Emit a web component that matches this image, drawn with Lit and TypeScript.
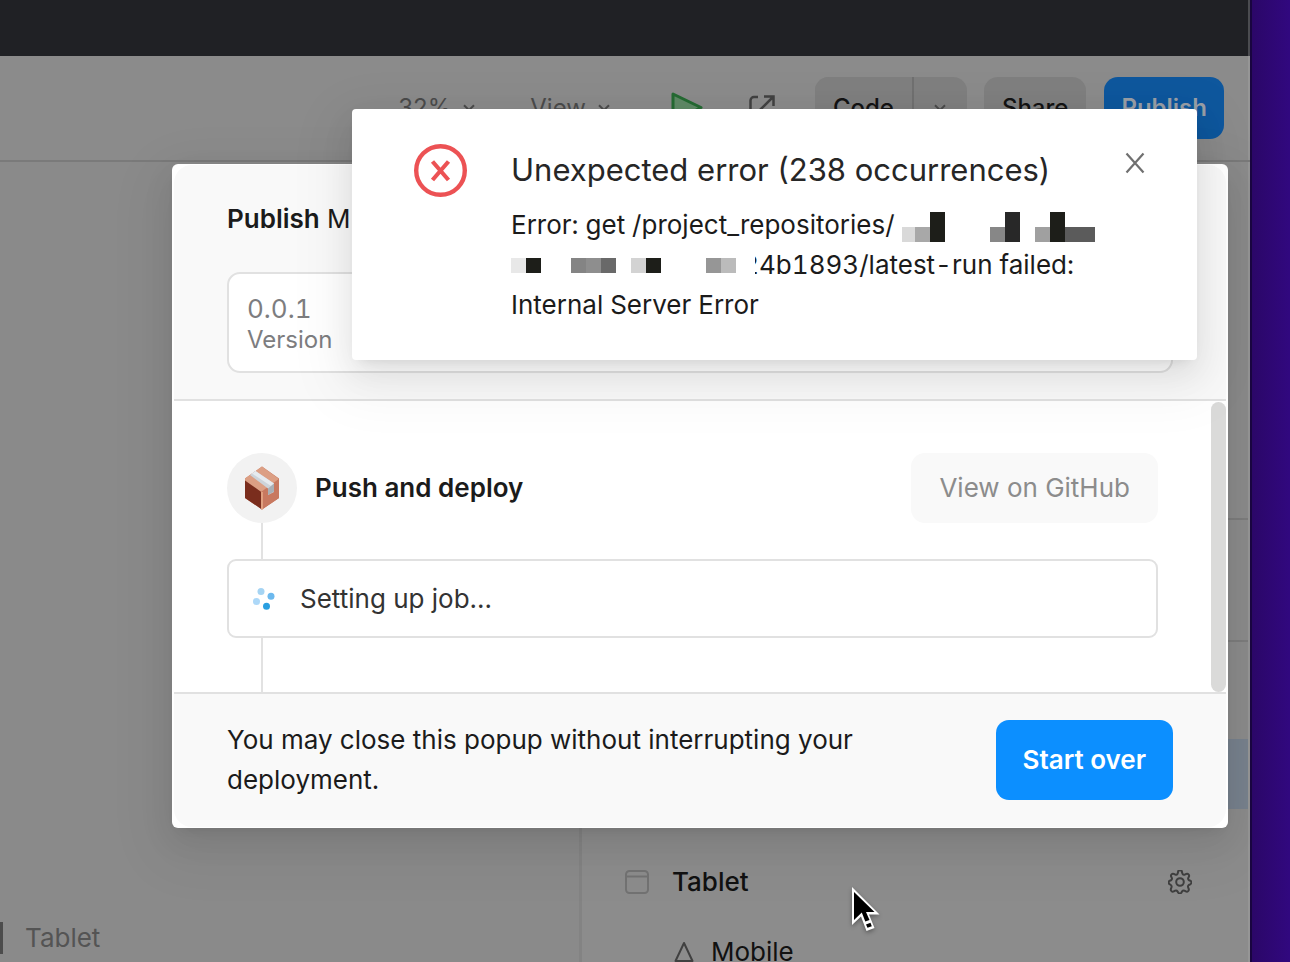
import { LitElement, html, css, svg } from "lit";
import { customElement, property } from "lit/decorators.js";

const FONT = css`"Inter", "Liberation Sans", sans-serif`;

const chevron = html`<svg class="chevron" width="12" height="8" viewBox="0 0 12 8" aria-hidden="true">
  <path d="M1 1.2 6 6.2 11 1.2" fill="none" stroke="currentColor" stroke-width="2" />
</svg>`;

@customElement("editor-toolbar")
export class EditorToolbar extends LitElement {
  static styles = css`
    :host {
      display: block;
      font: 400 24px/32px ${FONT};
    }
    .bar {
      display: flex;
      align-items: center;
      justify-content: flex-end;
      height: 104px;
      padding-right: 24px;
      background: #8b8b8b;
      border-bottom: 2px solid #7a7a7a;
      box-shadow: inset -2px 0 #969696;
      padding-right: 26px;
      box-sizing: content-box;
      color: #4b4b4b;
    }
    button {
      font: inherit;
      color: inherit;
      border: 0;
      padding: 0;
      background: none;
    }
    .menu {
      display: flex;
      align-items: center;
      gap: 12px;
      margin-right: 55px;
    }
    .play {
      margin-right: 46px;
      margin-left: 6px;
    }
    .open {
      margin-right: 40px;
    }
    .icon {
      display: flex;
    }
    .group {
      display: flex;
      height: 62px;
      border-radius: 14px;
      background: #7f7f7f;
      margin-right: 17px;
      overflow: hidden;
    }
    .solid {
      height: 62px;
      border-radius: 14px;
      background: #7f7f7f;
      padding: 0 18px;
      color: #141414;
      font-weight: 500;
    }
    .group .solid {
      border-radius: 0;
      border-right: 2px solid #707070;
    }
    .group .more {
      display: flex;
      align-items: center;
      justify-content: center;
      width: 53px;
    }
    .primary {
      margin-left: 18px;
      padding: 0 17px;
      background: #0e579d;
      color: #9a9fa6;
      font-weight: 600;
    }
  `;

  render() {
    return html`
      <header class="bar">
        <button class="menu">32% ${chevron}</button>
        <button class="menu">View ${chevron}</button>
        <button class="icon play" aria-label="Run">
          <svg width="32" height="32" viewBox="0 0 32 32">
            <path d="M2 2 30 15.500 2 30Z" fill="#5f8a66" stroke="#256b33" stroke-width="3" stroke-linejoin="round" />
          </svg>
        </button>
        <button class="icon open" aria-label="Open preview">
          <svg width="26" height="28" viewBox="0 0 26 28">
            <path
              d="M9 3H5a3.500 3.500 0 0 0-3.500 3.500V23A3.500 3.500 0 0 0 5 26.500h14a3.500 3.500 0 0 0 3.500-3.500v-6M11 16 23.500 3.500M15 2.500h9.500V12"
              fill="none"
              stroke="#424242"
              stroke-width="2.500"
            />
          </svg>
        </button>
        <div class="group">
          <button class="solid">Code</button>
          <button class="more" aria-label="More code options">${chevron}</button>
        </div>
        <button class="solid">Share</button>
        <button class="solid primary">Publish</button>
      </header>
    `;
  }
}

@customElement("editor-workspace")
export class EditorWorkspace extends LitElement {
  static styles = css`
    :host {
      display: flex;
      flex: 1;
      min-height: 0;
      overflow: hidden;
      border-right: 2px solid #969696;
      font: 400 26px/32px ${FONT};
    }
    .canvas {
      flex: 0 0 579px;
      display: flex;
      align-items: flex-end;
      padding-bottom: 8px;
      box-sizing: border-box;
      background: #8a8a8a;
    }
    .frame-label {
      border-left: 3px solid #4c4c4c;
      padding-left: 22px;
      color: #545454;
    }
    .panel {
      flex: 1;
      min-width: 0;
      background: #8c8c8c;
      border-left: 3px solid #838383;
      color: #111;
    }
    .section {
      border-bottom: 2px solid #7d7d7d;
      box-sizing: border-box;
      height: 122px;
    }
    .section.tall {
      height: 358px;
    }
    .selected {
      height: 70px;
      margin: 97px 0 38px;
      background: #78828e;
    }
    .row {
      display: flex;
      align-items: center;
      height: 70px;
      padding: 0 56px 0 43px;
      font-weight: 500;
    }
    .row .name {
      flex: 1;
      margin-left: 23px;
    }
    .row.child {
      padding-left: 92px;
      font-weight: 400;
    }
    .row.child .name {
      margin-left: 17px;
    }
    button {
      display: flex;
      padding: 0;
      border: 0;
      background: none;
    }
  `;

  render() {
    return html`
      <main class="canvas"><span class="frame-label">Tablet</span></main>
      <aside class="panel">
        <div class="section tall"></div>
        <div class="section"></div>
        <div class="selected"></div>
        <div class="row">
          <svg width="24" height="24" viewBox="0 0 24 24" aria-hidden="true">
            <rect x="1" y="1" width="22" height="22" rx="3.500" fill="none" stroke="#727272" stroke-width="2" />
            <path d="M1 6.500h22" stroke="#727272" stroke-width="2" />
          </svg>
          <span class="name">Tablet</span>
          <button aria-label="Tablet settings">
            <svg width="24" height="24" viewBox="0 0 24 24" fill="none" stroke="#3f3f3f" stroke-width="2" stroke-linejoin="round">
              <circle cx="12" cy="12" r="3.800" />
              <path
                d="M10 2.200a2 2 0 0 1 4 0l.500 1.500a2 2 0 0 0 2.300.900l1.500-.700a2 2 0 0 1 2.600 2.700l-.700 1.500a2 2 0 0 0 .900 2.200l1.200.400a2 2 0 0 1 0 3.600l-1.500.700a2 2 0 0 0-.700 2.200l.500 1.600a2 2 0 0 1-2.800 2.600l-1.400-.800a2 2 0 0 0-2.300.700l-.600 1.200a2 2 0 0 1-3.400 0l-.600-1.200a2 2 0 0 0-2.300-.700l-1.400.800a2 2 0 0 1-2.800-2.600l.500-1.600a2 2 0 0 0-.700-2.200l-1-.700a2 2 0 0 1 0-3.600l1.200-.400a2 2 0 0 0 .900-2.200l-.700-1.500a2 2 0 0 1 2.600-2.700l1.500.700a2 2 0 0 0 2.300-.900Z"
              />
            </svg>
          </button>
        </div>
        <div class="row child">
          <svg width="20" height="22" viewBox="0 0 20 22" aria-hidden="true">
            <path d="M10 2 18.500 20H1.500Z" fill="none" stroke="#404040" stroke-width="2" stroke-linejoin="round" />
          </svg>
          <span class="name">Mobile</span>
        </div>
      </aside>
    `;
  }
}

@customElement("publish-dialog")
export class PublishDialog extends LitElement {
  @property() version = "0.0.1";

  static styles = css`
    :host {
      display: block;
      font: 400 26px/40px ${FONT};
      color: #1b1b1b;
    }
    .dialog {
      background: #fff;
      border-radius: 6px;
      padding: 1px 2px;
      box-shadow: 0 6px 12px -8px rgba(0, 0, 0, 0.12), 0 12px 32px rgba(0, 0, 0, 0.08),
        0 18px 56px 16px rgba(0, 0, 0, 0.05);
    }
    .head {
      padding: 34px 53px 26px;
      background: #f9f9f9;
      border-radius: 18px 18px 0 0;
      border-bottom: 2px solid #e1e1e1;
    }
    h2 {
      margin: 0 0 33px;
      font: inherit;
    }
    h2 b {
      font-weight: 600;
    }
    .field {
      display: flex;
      flex-direction: column-reverse;
      padding: 19px 18px 16px;
      border: 2px solid #e1e1e1;
      border-radius: 13px;
      background: #fff;
      color: #7d7d7f;
    }
    .field input {
      font: 400 26px/32px ${FONT};
      font-variant-numeric: tabular-nums;
      height: 32px;
      color: inherit;
      border: 0;
      padding: 0;
      background: none;
      width: 100%;
      outline: 0;
    }
    .field label {
      font-size: 24px;
      line-height: 30px;
    }
    .body {
      display: flex;
    }
    .steps {
      flex: 1;
      display: flex;
      flex-direction: column;
      padding: 52px 53px 0;
    }
    .step {
      display: flex;
      align-items: center;
      gap: 18px;
    }
    .badge {
      display: grid;
      place-items: center;
      width: 70px;
      height: 70px;
      border-radius: 50%;
      background: #f2f2f2;
    }
    .step h3 {
      flex: 1;
      margin: 0;
      font: inherit;
      font-weight: 600;
    }
    .ghost {
      height: 70px;
      padding: 0 28px;
      border: 0;
      border-radius: 14px;
      background: #f9f9f9;
      color: #8c8c8c;
      font: 400 26px/40px ${FONT};
    }
    .link {
      width: 2px;
      height: 36px;
      margin-left: 34px;
      background: #e2e2e2;
    }
    .link.last {
      height: 54px;
    }
    .job {
      display: flex;
      align-items: center;
      gap: 23px;
      height: 75px;
      padding: 0 24px;
      border: 2px solid #e1e1e1;
      border-radius: 9px;
      color: #333;
    }
    .thumb {
      width: 15px;
      border-radius: 8px;
      background: #dadad9;
      margin-top: 1px;
    }
    .foot {
      display: flex;
      align-items: center;
      justify-content: space-between;
      gap: 100px;
      padding: 26px 53px 27px;
      background: #f9f9f9;
      border-top: 2px solid #e1e1e1;
      border-radius: 0 0 18px 18px;
    }
    .foot p {
      margin: 0;
    }
    .go {
      flex: none;
      height: 80px;
      padding: 0 27px;
      border: 0;
      border-radius: 13px;
      background: #0c8fff;
      color: #fff;
      font: 600 26px/40px ${FONT};
    }
  `;

  render() {
    return html`
      <section class="dialog" role="dialog" aria-labelledby="title">
        <div class="head">
          <h2 id="title"><b>Publish</b> M</h2>
          <div class="field">
            <label for="version">Version</label>
            <input id="version" .value=${this.version} />
          </div>
        </div>
        <div class="body">
          <div class="steps">
            <div class="step">
              <span class="badge">
                <svg width="36" height="44" viewBox="0 0 36 44" aria-hidden="true">
                  <path d="M18 .5 35 12.500V32L18 43.500 1 32V12.500Z" fill="#c5735a" />
                  <path d="M1 13 18 26V43.500L1 32Z" fill="#7a2d1d" />
                  <path d="M18 .5 35 13 18 26.500 1 14.500V12.500Z" fill="#dc9f84" />
                  <path d="M17 26 35 13V32L18 43.500Z" fill="#c87960" />
                  <path d="M17 26h2v17l-1 .7-1-.7Z" fill="#e0a080" />
                  <path d="M6 9 11.500 5 30 17.500V26L24 29V22.500Z" fill="#cdd4da" />
                  <path d="M8 7.500 11.500 5 30 17.500l-3 2.500Z" fill="#e6ebef" />
                  <path d="M24 22.500 30 17.500V25.500L24 29Z" fill="#a9b0b6" />
                </svg>
              </span>
              <h3>Push and deploy</h3>
              <button class="ghost">View on GitHub</button>
            </div>
            <div class="link"></div>
            <div class="job">
              <svg width="24" height="24" viewBox="0 0 24 24" aria-hidden="true">
                <circle cx="8" cy="4.500" r="3.500" fill="#a5d4f3" />
                <circle cx="18" cy="9.200" r="3.500" fill="#6cb9ee" />
                <circle cx="3.500" cy="14.500" r="3.500" fill="#add8f8" />
                <circle cx="13.500" cy="19.300" r="3.500" fill="#2a9fe0" />
              </svg>
              <span>Setting up job...</span>
            </div>
            <div class="link last"></div>
          </div>
          <div class="thumb"></div>
        </div>
        <div class="foot">
          <p>You may close this popup without interrupting your deployment.</p>
          <button class="go">Start over</button>
        </div>
      </section>
    `;
  }
}

type Block = [x: number, y: number, w: number, h: number, fill: string];

const MASK_TOP: Block[] = [
  [0, 19, 13, 15, "#d9d9d9"],
  [13, 19, 15, 15, "#a8a8a8"],
  [28, 4, 15, 30, "#1d1e19"],
  [88, 19, 15, 15, "#878787"],
  [103, 4, 15, 30, "#282828"],
  [133, 19, 15, 15, "#a0a0a0"],
  [148, 4, 15, 30, "#1d1e19"],
  [163, 19, 30, 15, "#5b5b5b"],
];

const MASK_BOTTOM: Block[] = [
  [0, 0, 15, 15, "#e8e8e8"],
  [15, 0, 15, 15, "#1d1e19"],
  [60, 0, 15, 15, "#848484"],
  [75, 0, 15, 15, "#8e8e8e"],
  [90, 0, 15, 15, "#696969"],
  [120, 0, 15, 15, "#d3d3d3"],
  [135, 0, 15, 15, "#1d1e19"],
  [195, 0, 15, 15, "#969696"],
  [210, 0, 15, 15, "#bbbbbb"],
];

const mask = (blocks: Block[], width: number, height: number) => html`<svg
  class="mask"
  width=${width}
  height=${height}
  shape-rendering="crispEdges"
  aria-hidden="true"
>
  ${blocks.map(([x, y, w, h, fill]) => svg`<rect x=${x} y=${y} width=${w} height=${h} fill=${fill} />`)}
</svg>`;

@customElement("error-notice")
export class ErrorNotice extends LitElement {
  @property({ type: Number }) count = 238;

  static styles = css`
    :host {
      display: block;
      font: 400 26px/40px ${FONT};
      color: #1b1b1b;
    }
    .notice {
      display: flex;
      align-items: flex-start;
      padding: 35px 52px 35px 62px;
      background: #fff;
      border-radius: 4px;
      box-shadow: 0 6px 12px -8px rgba(0, 0, 0, 0.12), 0 12px 32px rgba(0, 0, 0, 0.08),
        0 18px 56px 16px rgba(0, 0, 0, 0.05);
    }
    .status {
      flex: none;
      margin-right: 44px;
    }
    .text {
      flex: 1;
      min-width: 0;
    }
    h2 {
      margin: 0 0 9px;
      font-size: 31px;
      line-height: 52px;
      font-weight: 400;
      color: #262626;
    }
    .line {
      display: flex;
      align-items: center;
      gap: 7px;
      height: 40px;
      white-space: nowrap;
      font-variant-numeric: tabular-nums;
    }
    .masked {
      gap: 19px;
    }
    .mask {
      flex: none;
    }
    .tail {
      display: flex;
    }
    .cut {
      display: flex;
      justify-content: flex-end;
      width: 4px;
      overflow: hidden;
    }
    button {
      display: flex;
      padding: 8px 0;
      border: 0;
      background: none;
    }
  `;

  render() {
    return html`
      <section class="notice" role="alert">
        <svg class="status" width="53" height="53" viewBox="0 0 53 53" fill="none" stroke="#ec5254" aria-hidden="true">
          <circle cx="26.500" cy="26.500" r="24.300" stroke-width="4.400" />
          <path d="M18.500 17.500 34.500 36M34.500 17.500 18.500 36" stroke-width="4.200" />
        </svg>
        <div class="text">
          <h2>Unexpected error (${this.count} occurrences)</h2>
          <div class="line"><span>Error: get /project_repositories/</span>${mask(MASK_TOP, 193, 34)}</div>
          <div class="line masked">
            ${mask(MASK_BOTTOM, 225, 15)}
            <span class="tail"><span class="cut">2</span>4b1893/latest-run failed:</span>
          </div>
          <div class="line">Internal Server Error</div>
        </div>
        <button aria-label="Close">
          <svg width="20" height="22" viewBox="0 0 20 22">
            <path d="M1.500 1.500 18.500 20.500M18.500 1.500 1.500 20.500" fill="none" stroke="#707070" stroke-width="2.200" />
          </svg>
        </button>
      </section>
    `;
  }
}

@customElement("app-root")
export class AppRoot extends LitElement {
  static styles = css`
    :host {
      display: flex;
      height: 100vh;
      overflow: hidden;
      position: relative;
      background: linear-gradient(90deg, #2b0768, #31087f) right / 38px 100% no-repeat #190540;
    }
    .window {
      position: relative;
      flex: 1;
      display: flex;
      flex-direction: column;
      margin-right: 40px;
      background: #202125;
      overflow: hidden;
    }
    .title {
      flex: none;
      height: 56px;
      background: #202125;
      border-right: 2px solid #4b4c50;
    }
    .dialog {
      position: absolute;
      top: 164px;
      left: 172px;
      right: 22px;
    }
    .notice {
      position: absolute;
      top: 109px;
      left: 352px;
      right: 53px;
    }
    .pointer {
      position: absolute;
      left: 850px;
      top: 885px;
      filter: drop-shadow(0 2px 2px rgba(0, 0, 0, 0.35));
    }
  `;

  render() {
    return html`
      <div class="window">
        <div class="title"></div>
        <editor-toolbar></editor-toolbar>
        <editor-workspace></editor-workspace>
        <publish-dialog class="dialog"></publish-dialog>
        <error-notice class="notice"></error-notice>
        <svg class="pointer" width="32" height="48" viewBox="0 0 32 48" aria-hidden="true">
          <path d="M2 2V40L11 31.500 16.500 46 24.500 43 19 29.500H29.500Z" fill="#fff" />
          <path d="M4 7V35L11.800 27.500 15.300 36.500 19.500 35 16 27H24.500Z" fill="#000" />
          <path d="M16 39.500 20.500 37.800 21.800 41.200 17.500 42.800Z" fill="#000" />
        </svg>
      </div>
    `;
  }
}
